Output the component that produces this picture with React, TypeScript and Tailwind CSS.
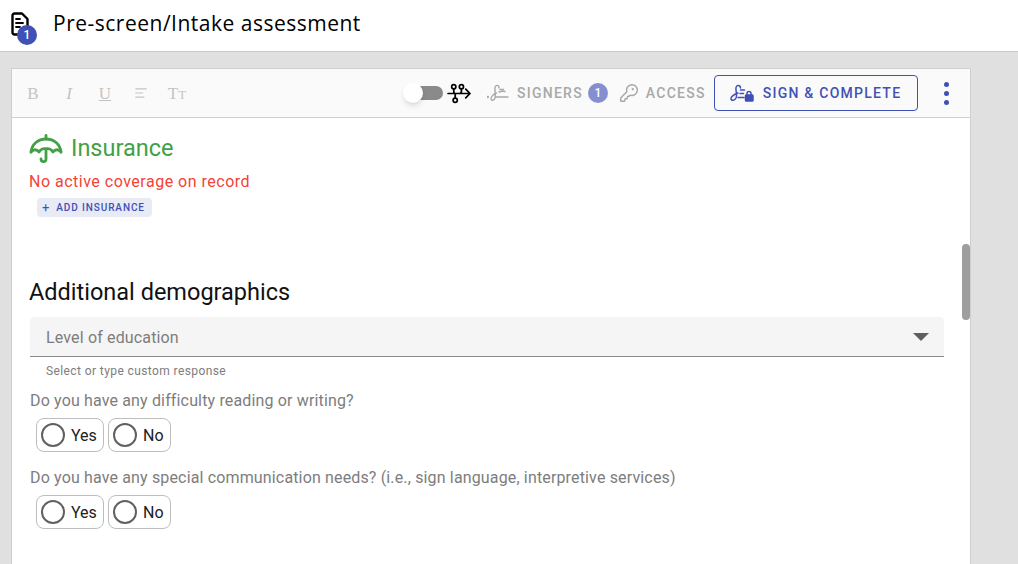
import { FC, ReactNode } from 'react';
import { AlignLeft, KeyRound } from 'lucide-react';

const SignatureIcon: FC<{ className?: string }> = ({ className }) => (
    <svg viewBox="0 0 24 18" fill="none" stroke="currentColor" strokeWidth="1.400" strokeLinecap="round" className={className}>
        <circle cx="0.800" cy="13" r="0.500" />
        <path d="M12 4C12 .8 8.500 .5 8 3.500 7.500 7 9 11 8 14c-.8 2.600-3.500 3-4 1-.5-2 2.500-5 5.500-6" />
        <path d="M13 5.500h3.500M12 8c2-1 4-1 6-.5" />
        <path d="M9 13h12" />
    </svg>
);

const SignLockIcon: FC<{ className?: string }> = ({ className }) => (
    <svg viewBox="0 0 24 18" fill="none" stroke="currentColor" strokeWidth="1.500" strokeLinecap="round" className={className}>
        <path d="M10.500 4C10.500 .8 6.500 .5 6 3.500 5.500 7 7.500 10.500 6 14c-1.200 2.600-4.500 3-5 1-.5-2 3.500-5 7-6" />
        <path d="M10.500 6h4M10 9.500h3.500M8 13.500h6" />
        <path d="M17 11V9.500a2 2 0 0 1 4 0V11" />
        <rect x="15.500" y="11" width="7.500" height="6" rx="0.800" fill="currentColor" />
    </svg>
);

const WorkflowIcon: FC = () => (
    <svg viewBox="0 0 26 22" fill="none" stroke="black" strokeWidth="1.800" strokeLinecap="round" strokeLinejoin="round" className="w-[25px] h-[21px]">
        <circle cx="7" cy="4" r="2.200" />
        <circle cx="15" cy="4" r="2.200" />
        <circle cx="8.500" cy="18" r="2.200" />
        <path d="M1 11h23M19.500 6.500 24 11l-4.500 4.500M7 6.200V9c0 1 .6 2 1.500 2v4.800M15 6.200V9c0 1.200-.8 2-2 2" />
    </svg>
);

const UmbrellaIcon: FC = () => (
    <svg viewBox="0 0 34 30" fill="none" stroke="#43a047" strokeWidth="2.800" strokeLinecap="round" strokeLinejoin="round" className="w-[34px] h-[30px]">
        <path d="M17 1.500V5" />
        <path d="M2 18C3 10 9 5 17 5s14 5 15 13" />
        <path d="M2 18c2-3 6-3 8 0 1.500-3 5-4 7-3 2-1 5.500 0 7 3 2-3 6-3 8 0" />
        <path d="M17 15v10c0 3.500-5 3.500-5 0" />
    </svg>
);

const DocIcon: FC = () => (
    <svg viewBox="0 0 18 24" className="w-[18px] h-[24px] -mt-[4px]" fill="none" stroke="black" strokeWidth="2.400" strokeLinejoin="round" strokeLinecap="round">
        <path d="M3.500 1.500h7.500l5.500 5.500v13.500a2 2 0 0 1-2 2h-11a2 2 0 0 1-2-2v-17a2 2 0 0 1 2-2z" />
        <path d="M5 7h4M5 11h7M5 15h4" strokeWidth="1.800" />
    </svg>
);

const ToolSlot: FC<{ children: ReactNode }> = ({ children }) => (
    <span className="w-[36px] flex items-center justify-center">{children}</span>
);

const RadioPill: FC<{ label: string; width: string }> = ({ label, width }) => (
    <label className={`flex items-center h-[34px] rounded-lg border border-[#bdbdbd] pl-[4px] ${width}`}>
        <span className="w-[24px] h-[24px] rounded-full border-2 border-[#616161]" />
        <span className="ml-[6px] pt-[2px] text-base text-[#212121]">{label}</span>
    </label>
);

const Question: FC<{ text: string; className?: string }> = ({ text, className }) => (
    <div className={className}>
        <p className="h-[19px] leading-[19px] text-base tracking-[0.15px] text-[#7d7d7d]">{text}</p>
        <div className="flex gap-1 ml-[6px] mt-[8px]">
            <RadioPill label="Yes" width="w-[68px]" />
            <RadioPill label="No" width="w-[63px]" />
        </div>
    </div>
);

export default function App() {
    return (
        <div className="w-[1018px] h-[564px] overflow-hidden bg-[#e0e0e0] font-['Roboto',sans-serif]">
            <header className="flex items-center h-[52px] bg-white border-b border-[#c8c8c8]">
                <div className="relative ml-[11px] w-[26px] h-[44px] flex items-center">
                    <DocIcon />
                    <span className="absolute left-[6px] top-[21px] w-[20px] h-[20px] rounded-full bg-[#3f51b5] text-white text-xs font-medium flex items-center justify-center">1</span>
                </div>
                <h1 className="ml-[16px] text-[21px] text-black font-['Open_Sans',sans-serif] tracking-[0.5px] -mt-[4px]">Pre-screen/Intake assessment</h1>
            </header>

            <main className="relative ml-[11px] mt-[16px] w-[960px] h-[500px] bg-white border border-[#cfcfcf]">
                <div className="flex items-center h-[49px] bg-[#fafafa] border-b border-[#cfcfcf]">
                    <div className="flex items-center pl-[3px] text-[#c4c4c4] font-['Liberation_Serif',serif] text-[17px] leading-none">
                        <ToolSlot>B</ToolSlot>
                        <ToolSlot><span className="italic">I</span></ToolSlot>
                        <ToolSlot><span className="underline">U</span></ToolSlot>
                        <ToolSlot><AlignLeft size={14} /></ToolSlot>
                        <ToolSlot><span>T<span className="text-[13px]">T</span></span></ToolSlot>
                    </div>
                    <div className="relative ml-[210px] w-[38px] h-[14px] rounded-full bg-[#8a8a8a]">
                        <span className="absolute left-[-2px] top-[-3px] w-[20px] h-[20px] rounded-full bg-white shadow-md" />
                    </div>
                    <div className="ml-[4px] flex"><WorkflowIcon /></div>
                    <SignatureIcon className="ml-[15px] w-[24px] h-[18px] text-[#a8a8a8]" />
                    <span className="ml-[6px] text-sm font-medium tracking-[1.250px] text-[#a8a8a8]">SIGNERS</span>
                    <span className="ml-[5px] w-[20px] h-[20px] rounded-full bg-[#858fd0] text-white text-xs font-medium flex items-center justify-center">1</span>
                    <KeyRound size={20} strokeWidth={1.800} className="ml-[11px] text-[#a8a8a8]" />
                    <span className="ml-[7px] text-sm font-medium tracking-[1.250px] text-[#a8a8a8]">ACCESS</span>
                    <button className="ml-[8px] flex items-center w-[204px] h-[36px] rounded border border-[#3f51b5] pl-[15px] text-[#3f51b5]">
                        <SignLockIcon className="w-[24px] h-[18px]" />
                        <span className="ml-[9px] text-sm font-medium tracking-[1.250px]">SIGN &amp; COMPLETE</span>
                    </button>
                    <span className="ml-[26px] flex flex-col gap-[4px]">
                        <span className="w-[5px] h-[5px] rounded-full bg-[#3f51b5]" />
                        <span className="w-[5px] h-[5px] rounded-full bg-[#3f51b5]" />
                        <span className="w-[5px] h-[5px] rounded-full bg-[#3f51b5]" />
                    </span>
                </div>

                <section className="pl-[17px] pr-[26px]">
                    <div className="flex items-center gap-2 mt-[16px] h-[30px]">
                        <UmbrellaIcon />
                        <h2 className="text-[23.500px] text-[#43a047]">Insurance</h2>
                    </div>
                    <p className="mt-[8px] h-[19px] leading-[19px] text-base tracking-[0.5px] text-[#f44336]">No active coverage on record</p>
                    <button className="flex items-center gap-[6px] ml-[8px] mt-[7px] w-[115px] h-[19px] rounded bg-[#e8eaf6] pl-[5px] text-[10px] font-medium tracking-[0.9px] text-[#3f51b5]">
                        <span className="text-[13px] leading-none font-normal">+</span>
                        ADD INSURANCE
                    </button>

                    <h2 className="mt-[61px] h-[28px] leading-[28px] text-[23.500px] text-[#111111]">Additional demographics</h2>
                    <div className="mt-[11px] flex items-center justify-between ml-[1px] w-[914px] h-[40px] bg-[#f5f5f5] border-b border-[#8a8a8a] rounded-t pl-[16px] pr-[15px] text-base tracking-[0.15px] text-[#7d7d7d]">
                        <span className="pt-[2px]">Level of education</span>
                        <span className="w-0 h-0 border-x-[8px] border-x-transparent border-t-[8px] border-t-[#5f5f5f]" />
                    </div>
                    <p className="mt-[7px] ml-[17px] h-[14px] leading-[14px] text-xs tracking-[0.4px] text-[#7d7d7d]">Select or type custom response</p>
                    <Question text="Do you have any difficulty reading or writing?" className="ml-[1px] mt-[13px]" />
                    <Question text="Do you have any special communication needs? (i.e., sign language, interpretive services)" className="ml-[1px] mt-[16px]" />
                </section>

                <div className="absolute right-0 top-[175px] w-[8px] h-[76px] rounded-full bg-[#9e9e9e]" />
            </main>
        </div>
    );
}
